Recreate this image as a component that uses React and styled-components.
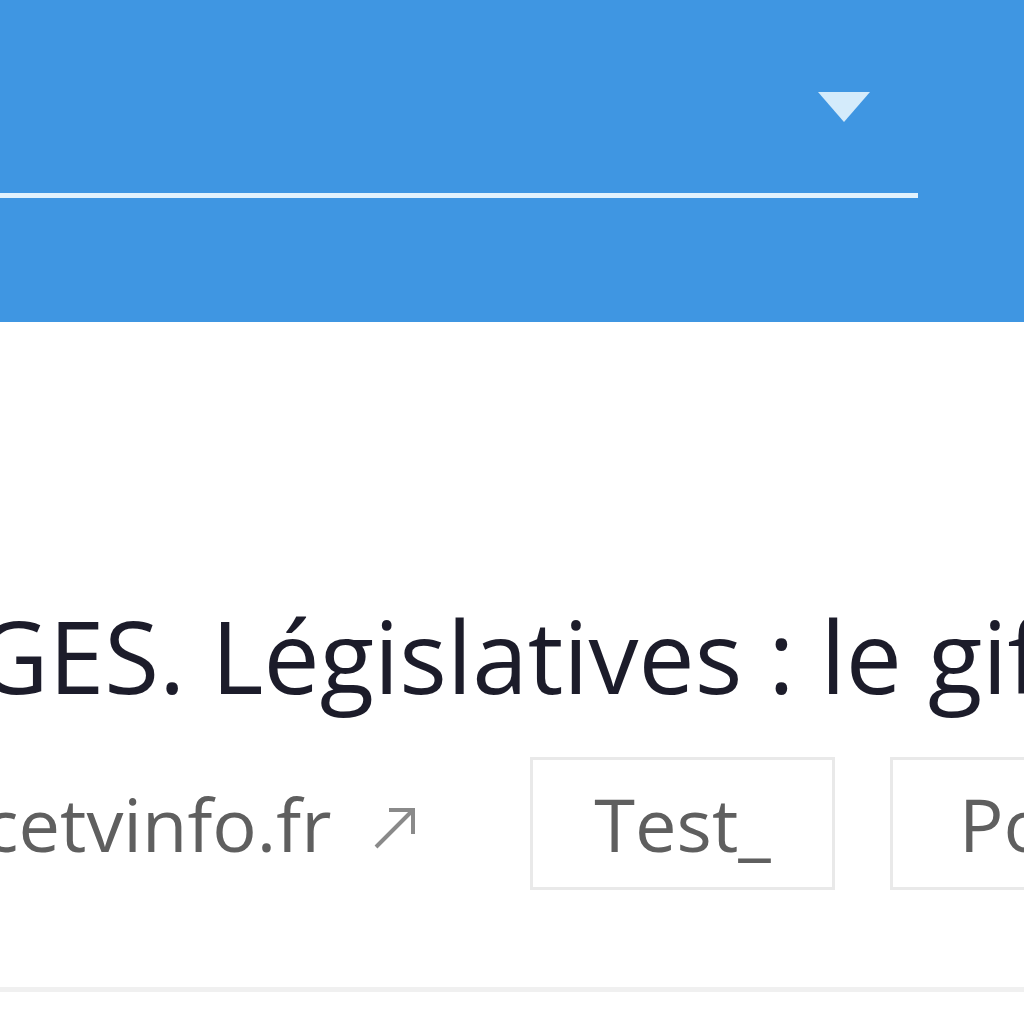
import React from "react"
import styled, { createGlobalStyle } from "styled-components"

const Global = createGlobalStyle`
    body{
        margin: 0;
        background: #ffffff;
        overflow: hidden;
        font-family: "Open Sans", "Noto Sans", sans-serif;
    }
`

const Page = styled.div`
    width: 1024px;
    height: 1024px;
    overflow: hidden;
`

const Header = styled.header`
    background: #3f96e2;
    height: 322px;
`

const Select = styled.div`
    width: 918px;
    height: 198px;
    border-bottom: 5px solid #e2f2fd;
    display: flex;
    justify-content: flex-end;
    align-items: flex-start;
    padding-right: 48px;
    padding-top: 92px;
    box-sizing: border-box;
`

const Caret = styled.span`
    width: 0;
    height: 0;
    border-left: 26px solid transparent;
    border-right: 26px solid transparent;
    border-top: 30px solid #d4ebfb;
`

const Article = styled.article`
    padding-top: 283px;
    border-bottom: 5px solid #f0f0f0;
    height: 670px;
    box-sizing: border-box;
`

const Title = styled.h1`
    margin: 0 0 0 -24px;
    font-size: 100px;
    font-weight: 400;
    line-height: 1;
    color: #1c1c2a;
    white-space: nowrap;
`

const Meta = styled.div`
    display: flex;
    align-items: center;
    margin-top: 52px;
    white-space: nowrap;
`

const Source = styled.span`
    display: flex;
    align-items: center;
    font-size: 74px;
    color: #5f5f5f;
    width: 547px;
    margin-left: -17px;
    flex: none;
`

const Arrow = styled.svg`
    width: 44px;
    height: 44px;
    margin-left: 42px;
    margin-top: 8px;
`

const Tag = styled.span`
    flex: none;
    width: 305px;
    height: 133px;
    box-sizing: border-box;
    border: 3px solid #e9e9e9;
    display: flex;
    align-items: center;
    justify-content: ${p => p.$left ? "flex-start" : "center"};
    padding-left: ${p => p.$left ? "66px" : "0"};
    margin-right: 55px;
    font-size: 74px;
    color: #5f5f5f;
`

const App = () =>
    <Page>
        <Global/>
        <Header>
            <Select>
                <Caret/>
            </Select>
        </Header>
        <Article>
            <Title>GES. Législatives : le gif</Title>
            <Meta>
                <Source>
                    cetvinfo.fr
                    <Arrow viewBox="0 0 44 44" fill="none" stroke="#8a8a8a" strokeWidth="4">
                        <path d="M3 41 L40 4 M16 4 H40 V28"/>
                    </Arrow>
                </Source>
                <Tag>Test_</Tag>
                <Tag $left>Po</Tag>
            </Meta>
        </Article>
    </Page>

export default App
